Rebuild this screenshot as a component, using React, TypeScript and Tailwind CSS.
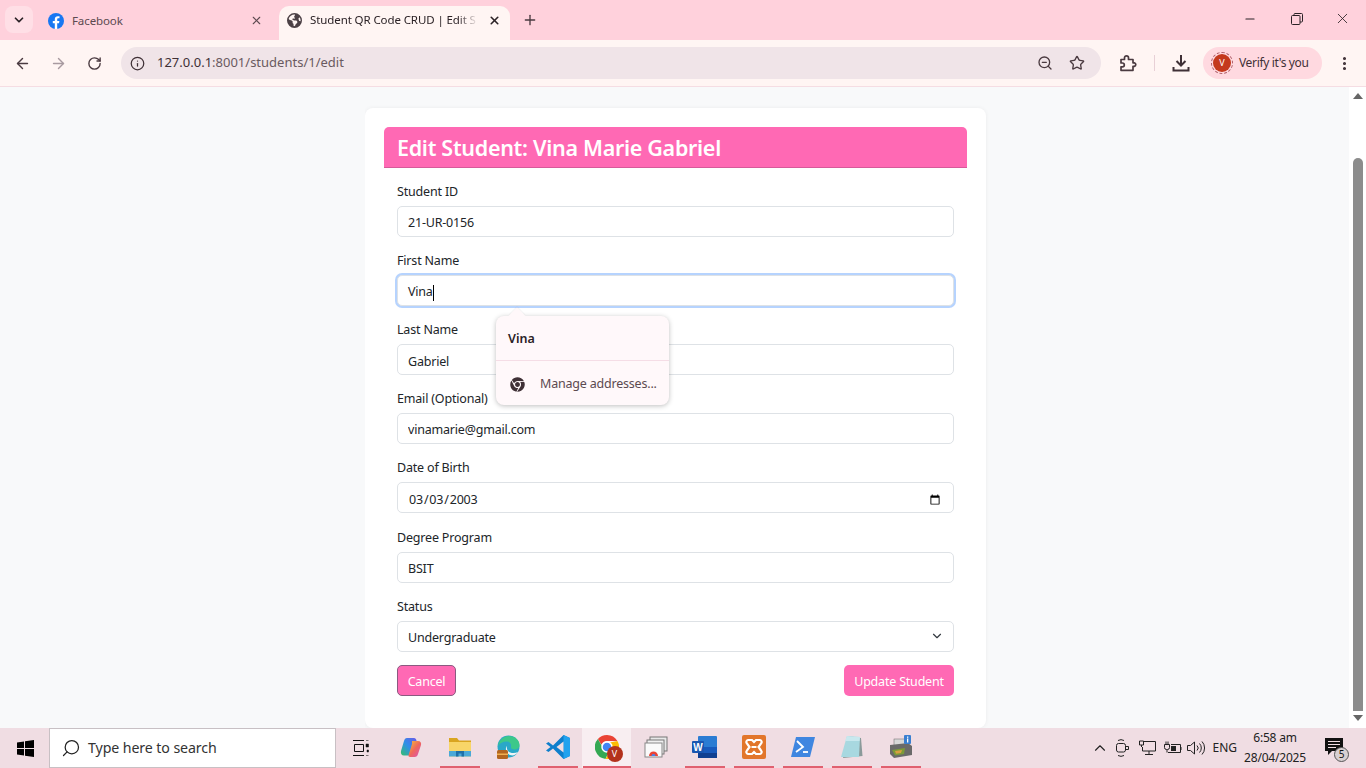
import { ArrowLeft, ArrowRight, ChevronDown, ChevronUp, Info, Minus, MoreVertical, Plus, RotateCw, Search, Star, X, ZoomOut } from 'lucide-react'
import { FaChrome } from 'react-icons/fa'
import { FaEarthAmericas } from 'react-icons/fa6'
import type { ReactNode } from 'react'

const uiFont = { fontFamily: '"Noto Sans", "Open Sans", sans-serif' }

function FacebookIcon() {
  return (
    <svg width="16" height="16" viewBox="0 0 16 16">
      <circle cx="8" cy="8" r="8" fill="#1877f2" />
      <path d="M11 10.3l.4-2.3H9.2V6.5c0-.7.3-1.2 1.3-1.2h1V3.3S10.600 3.200 9.800 3.200C8 3.200 6.800 4.300 6.800 6.200V8h-2v2.300h2V16h2.400v-5.700z" fill="#fff" />
    </svg>
  )
}

function ExtensionIcon() {
  return (
    <svg width="20" height="20" viewBox="0 0 20 20" fill="none" stroke="#4a3a40" strokeWidth="1.7" strokeLinejoin="round">
      <path d="M3 6.500h3.500V4.800a2 2 0 0 1 4 0v1.700H15v3.300h1.400a1.800 1.800 0 0 1 0 3.500H15v4H3v-3.500h1.400a1.900 1.900 0 0 0 0-3.800H3z" />
    </svg>
  )
}

function DownloadIcon() {
  return (
    <svg width="18" height="18" viewBox="0 0 18 18" fill="none" stroke="#3f3036" strokeWidth="2">
      <path d="M9 1v10M4.500 7L9 11.500 13.500 7M1.500 13v3.500h15V13" />
    </svg>
  )
}

function RestoreIcon() {
  return (
    <svg width="12" height="12" viewBox="0 0 12 12" fill="none" stroke="#2b2226" strokeWidth="1">
      <rect x="0.500" y="2.500" width="8.500" height="9" rx="1" />
      <path d="M3 2.500V1.500a1 1 0 0 1 1-1h6.500a1 1 0 0 1 1 1V8a1 1 0 0 1-1 1H9" />
    </svg>
  )
}

function WindowsLogo() {
  return (
    <svg width="17" height="17" viewBox="0 0 17 17" fill="#000">
      <path d="M0 2.400l7-1V8H0zM8 1.200l9-1.200V8H8zM0 9h7v6.600l-7-1zM8 9h9v8l-9-1.300z" />
    </svg>
  )
}

function TaskViewIcon() {
  return (
    <svg width="16" height="16" viewBox="0 0 16 16" fill="none" stroke="#111" strokeWidth="1">
      <path d="M0 .500h11M0 15.500h11M1.500 4.500h9v7h-9z" />
      <path d="M13 4h2.500v3H13zM13 .500h2.500M13 15.500h2.500M14 10h1.500v2H14z" fill="#111" strokeWidth="0.500" />
    </svg>
  )
}

function CopilotIcon() {
  return (
    <svg width="24" height="24" viewBox="0 0 24 24">
      <defs>
        <linearGradient id="copilotA" x1="0" y1="1" x2="1" y2="0">
          <stop offset="0" stopColor="#36c06a" />
          <stop offset="0.500" stopColor="#2f8fe8" />
          <stop offset="1" stopColor="#6a5ae8" />
        </linearGradient>
        <linearGradient id="copilotB" x1="0" y1="0" x2="1" y2="1">
          <stop offset="0" stopColor="#f5c33b" />
          <stop offset="0.500" stopColor="#f0685a" />
          <stop offset="1" stopColor="#d84fc0" />
        </linearGradient>
      </defs>
      <path d="M8 3h7c1.500 0 2 1 2.500 2.500L14 18c-.5 1.600-1.500 2.500-3 2.500H5c-2.500 0-3.500-2-3-4.500l3-10C5.500 4 6.500 3 8 3z" fill="url(#copilotA)" />
      <path d="M13 6h6c2.500 0 3.500 2 3 4l-3 9c-.5 1.800-1.500 3-3.500 3H11c-1.200 0-1.800-.8-1.400-2L13 9c.2-1.500 0-3 0-3z" fill="url(#copilotB)" />
    </svg>
  )
}

function FolderIcon() {
  return (
    <svg width="24" height="22" viewBox="0 0 24 22">
      <path d="M1 2h8l2 2.500h12V8H1z" fill="#d9a520" />
      <path d="M1 6h22v14.500H1z" fill="#f8d568" />
      <path d="M1 15h22v5.500H1z" fill="#4aa8d8" />
      <path d="M8 20.500V15h8v5.500h-2.500V17.500h-3v3z" fill="#1f6fa8" />
    </svg>
  )
}

function EdgeIcon() {
  return (
    <svg width="25" height="25" viewBox="0 0 25 25">
      <circle cx="12.500" cy="11.500" r="11" fill="#2aa8c8" />
      <path d="M2 11C3 4 9 1 13 1c6 0 10.500 4 10.500 9 0 3-2.500 4.500-5 4.500-3 0-4-1.500-3.500-3 .5-3-1.500-5-4.500-5C7 6.500 3.500 8 2 11z" fill="#3dc88a" />
      <path d="M11 11c-2 2-1.500 7 3 9 3 1 6 0 8-3-3 1.500-8 1.500-10-1-1-1.500-1.500-3-1-5z" fill="#f0f4f6" />
      <rect x="1" y="15" width="11" height="9" rx="1.500" fill="#b3661f" />
      <rect x="1" y="18.500" width="11" height="1.500" fill="#f0b050" />
    </svg>
  )
}

function VsCodeIcon() {
  return (
    <svg width="24" height="24" viewBox="0 0 24 24">
      <path d="M17.500 0L24 3v18l-6.500 3L7 13.500l-4.500 3.500L0 15.500 4.500 12 0 8.500 2.500 7 7 10.500z" fill="#0f7fcc" />
      <path d="M17.500 0L24 3v18l-6.500 3z" fill="#22a2ee" />
      <path d="M17.500 6.500v11L10.500 12z" fill="#f0dde3" />
    </svg>
  )
}

function ChromeTaskIcon() {
  return (
    <div className="relative h-6 w-6">
      <svg width="24" height="24" viewBox="0 0 24 24">
        <path d="M12 0a12 12 0 0 1 10.400 6H12a6 6 0 0 0-5.600 3.800L2.900 4.100A12 12 0 0 1 12 0z" fill="#ea4335" />
        <path d="M2.900 4.100l4.500 8a5 5 0 0 0 6.400 4.700L10.500 24A12 12 0 0 1 2.900 4.100z" fill="#34a853" />
        <path d="M22.400 6a12 12 0 0 1-11.900 18l5.200-9a6 6 0 0 0-.7-7.500z" fill="#fbbc04" />
        <circle cx="12" cy="12" r="5" fill="#4285f4" stroke="#fff" strokeWidth="1.500" />
      </svg>
      <span className="absolute -bottom-[3px] -right-[4px] flex h-[16px] w-[16px] items-center justify-center rounded-full bg-[#b3321c] text-[9px] text-white">V</span>
    </div>
  )
}

function RecentIcon() {
  return (
    <svg width="24" height="22" viewBox="0 0 24 22">
      <rect x="6" y="1" width="17" height="14" fill="#e8e8e8" stroke="#777" />
      <rect x="3" y="4" width="17" height="14" fill="#f0f0f0" stroke="#777" />
      <rect x="1" y="7" width="17" height="14" fill="#fafafa" stroke="#888" />
      <path d="M5 20a4.500 4.500 0 0 1 9 0z" fill="#ea4335" />
      <path d="M7.500 20a2 2 0 0 1 4 0z" fill="#4285f4" />
    </svg>
  )
}

function WordIcon() {
  return (
    <svg width="25" height="22" viewBox="0 0 25 22">
      <rect x="6" y="0" width="19" height="22" rx="1" fill="#2b7cd3" />
      <rect x="6" y="11" width="19" height="6" fill="#185abd" />
      <rect x="6" y="17" width="19" height="5" fill="#103f91" />
      <rect x="0" y="5" width="12" height="12" rx="1" fill="#1a56b0" />
      <text x="6" y="14.500" textAnchor="middle" fontSize="10" fontWeight="700" fill="#fff" fontFamily="Liberation Sans">W</text>
    </svg>
  )
}

function XamppIcon() {
  return (
    <svg width="24" height="24" viewBox="0 0 24 24">
      <rect width="24" height="24" rx="2" fill="#e2762b" />
      <path d="M6 5h4l2 2 2-2h4a2 2 0 0 1 1 3.500L16.500 12 19 15.500A2 2 0 0 1 18 19h-4l-2-2-2 2H6a2 2 0 0 1-1-3.500L7.500 12 5 8.500A2 2 0 0 1 6 5z" fill="none" stroke="#fff" strokeWidth="2.200" />
      <path d="M9.500 12h5" stroke="#fff" strokeWidth="2" />
    </svg>
  )
}

function PowerShellIcon() {
  return (
    <svg width="24" height="20" viewBox="0 0 24 20">
      <path d="M5 0h19l-5 20H0z" fill="#3f86e0" />
      <path d="M6 4l6 6-7 5" fill="none" stroke="#fff" strokeWidth="1.800" />
      <path d="M12 15h5" stroke="#fff" strokeWidth="1.800" />
    </svg>
  )
}

function NotepadIcon() {
  return (
    <svg width="24" height="24" viewBox="0 0 24 24">
      <path d="M8 1l13 2 1.500 18L3 23z" fill="#8a9a9a" />
      <path d="M7 1l13 1-1 20H1z" fill="#a8d8e0" />
      <path d="M7 1l13 1-.5 4H5z" fill="#c8e8ee" />
    </svg>
  )
}

function PrinterIcon() {
  return (
    <svg width="24" height="24" viewBox="0 0 24 24">
      <rect x="5" y="4" width="13" height="7" fill="#d8d8d8" stroke="#666" strokeWidth="0.500" />
      <path d="M1 10l18-2 4 3v9l-18 3-4-4z" fill="#6a6a6a" />
      <path d="M3 15l13-2-1 6-9 1.500z" fill="#7c9a38" />
      <path d="M6 16l7-1-1 3-5 .8z" fill="#d8a040" />
      <rect x="15" y="0" width="7" height="9" rx="1" fill="#3a7fd0" />
      <rect x="18" y="1.500" width="1.300" height="1.300" fill="#fff" />
      <rect x="18" y="3.500" width="1.300" height="4" fill="#fff" />
    </svg>
  )
}

function CameraTrayIcon() {
  return (
    <svg width="16" height="18" viewBox="0 0 16 18" fill="none" stroke="#222" strokeWidth="1">
      <rect x="1.500" y="4.500" width="9" height="8.500" rx="2" />
      <path d="M10.500 7.500h3v3h-3M3 1.500a6 6 0 0 1 6 0M3 16.500a6 6 0 0 0 6 0" />
    </svg>
  )
}

function NetworkTrayIcon() {
  return (
    <svg width="17" height="16" viewBox="0 0 17 16" fill="none" stroke="#222" strokeWidth="1">
      <path d="M4 1.500h12.500v9.500H3.500V7M10 11v3.500M6 14.500h8" />
      <path d="M.5 1h4v4h-4zM2.500 5v2" />
    </svg>
  )
}

function BatteryTrayIcon() {
  return (
    <svg width="18" height="14" viewBox="0 0 18 14" fill="none" stroke="#222" strokeWidth="1">
      <path d="M7 3.500h9.500v8H4" />
      <path d="M17 6v3" />
      <path d="M.5 3.500h5v3a2 2 0 0 1-2 2h-1a2 2 0 0 1-2-2zM2 .5v3M4 .5v3M3 8.500v3" />
      <rect x="7" y="5" width="5" height="5" fill="#222" stroke="none" />
    </svg>
  )
}

function SpeakerTrayIcon() {
  return (
    <svg width="18" height="16" viewBox="0 0 18 16" fill="none" stroke="#222" strokeWidth="1">
      <path d="M.5 5.500h3L7.500 2v12l-4-3.500h-3z" />
      <path d="M10 5.500a3.500 3.500 0 0 1 0 5M12.500 3.500a6.500 6.500 0 0 1 0 9M15 1.500a9.500 9.500 0 0 1 0 13" />
    </svg>
  )
}

function NotificationIcon() {
  return (
    <div className="relative h-[20px] w-[24px]">
      <svg width="18" height="18" viewBox="0 0 18 18">
        <path d="M0 0h18v13H7l-4 4v-4H0z" fill="#111" />
        <path d="M3 3.500h12M3 6.500h12M3 9.500h8" stroke="#f0dde3" strokeWidth="1" />
      </svg>
      <span className="absolute -bottom-[4px] right-0 flex h-[15px] w-[15px] items-center justify-center rounded-full border border-[#555] bg-[#d8d0d2] text-[10px] text-[#111]">5</span>
    </div>
  )
}

function TabBar() {
  return (
    <div className="flex h-10 items-end bg-[#ffd1dc]" style={uiFont}>
      <div className="mb-[7px] ml-[5px] flex h-[27px] w-[28px] items-center justify-center rounded-lg bg-[#ffdfe6]">
        <ChevronDown size={14} strokeWidth={3} color="#2b2226" />
      </div>
      <div className="mb-[6px] ml-[15px] flex h-[27px] w-[217px] items-center">
        <FacebookIcon />
        <span className="ml-2 text-[11.500px] tracking-[-0.1px] text-[#5c4a50]">Facebook</span>
        <X size={13} strokeWidth={2} color="#5c4a50" className="ml-auto mr-[2px]" />
      </div>
      <div className="ml-[14px] flex h-[34px] w-[231px] items-center rounded-t-[10px] bg-[#fff5f3] pb-[6px] pl-[8px]">
        <FaEarthAmericas size={15} color="#4c4045" />
        <span className="ml-2 w-[168px] overflow-hidden whitespace-nowrap text-[11.500px] tracking-[-0.1px] text-[#2b2226] [mask-image:linear-gradient(to_right,black_88%,transparent)]">Student QR Code CRUD | Edit S</span>
        <X size={13} strokeWidth={3} color="#2b2226" className="ml-[10px]" />
      </div>
      <Plus size={16} strokeWidth={2} color="#4a3a40" className="mb-[12px] ml-[12px]" />
      <div className="mb-[13px] ml-auto flex items-center">
        <Minus size={14} strokeWidth={1.8} color="#2b2226" className="mr-[34px]" />
        <RestoreIcon />
        <X size={17} strokeWidth={1.2} color="#2b2226" className="ml-[31px] mr-[15px]" />
      </div>
    </div>
  )
}

function ToolBar() {
  return (
    <div className="flex h-[47px] items-center border-b border-[#f5dde3] bg-[#fff5f3]" style={uiFont}>
      <ArrowLeft size={17} strokeWidth={2} color="#4a3a40" className="ml-[14px]" />
      <ArrowRight size={17} strokeWidth={2} color="#a89aa0" className="ml-[19px]" />
      <RotateCw size={15} strokeWidth={2.2} color="#4a3a40" className="ml-[20px]" />
      <div className="ml-[19px] flex h-8 w-[980px] items-center rounded-full bg-[#f0e4e8] pl-[9px] pr-[16px]">
        <Info size={15} strokeWidth={2} color="#3f3036" />
        <span className="ml-[12px] text-[13px] text-[#3f3036]">127.0.0.1<span className="text-[#6a5a60]">:8001/students/1/edit</span></span>
        <ZoomOut size={16} strokeWidth={2} color="#4a3a40" className="ml-auto" />
        <Star size={16} strokeWidth={2} color="#4a3a40" className="ml-[16px]" />
      </div>
      <div className="ml-[17px]"><ExtensionIcon /></div>
      <div className="ml-[16px] h-[16px] w-px bg-[#e8d0d6]" />
      <div className="ml-[17px]"><DownloadIcon /></div>
      <div className="ml-[13px] flex h-8 w-[119px] items-center rounded-full bg-[#ffd9e0] pl-[10px]">
        <span className="flex h-[18px] w-[18px] items-center justify-center rounded-full bg-[#c4391d] text-[9px] text-white outline-1 outline-offset-1 outline-dashed outline-[#b0606a]">V</span>
        <span className="ml-[8px] text-[12px] tracking-[-0.35px] text-[#3f3036]">Verify it's you</span>
      </div>
      <MoreVertical size={17} strokeWidth={2.4} color="#3f3036" className="ml-[14px]" />
    </div>
  )
}

function Field({ label, children }: { label: string; children: ReactNode }) {
  return (
    <div className="mb-[16.120px]">
      <div className="mb-[7px] h-[15px] text-[12.500px] leading-[15px] tracking-[-0.18px] text-[#212529]">{label}</div>
      {children}
    </div>
  )
}

// pt nudges the text down to where the reference has it
const inputBase = 'block h-[31px] w-full rounded-[5px] border border-[#dee2e6] bg-white px-[10px] text-[12.500px] tracking-[-0.2px] text-[#212529] outline-none'
const inputClass = `${inputBase} pt-[2px]`
const inputLowClass = `${inputBase} pt-[4px]`

function StudentForm() {
  return (
    <div className="relative ml-[365px] h-[641px] overflow-hidden pt-[21px]" style={uiFont}>
      <div className="h-[620px] w-[621px] rounded-[8px] bg-white p-[19px] shadow-[0_0_4px_rgba(0,0,0,0.06)]">
        <h1 className="flex h-[41px] items-center rounded-t-[5px] border-b border-[#d65a9a] bg-[#ff69b4] px-[13px] pt-[2px] text-[21.500px] font-semibold tracking-[-0.3px] text-white">Edit Student: Vina Marie Gabriel</h1>
        <div className="px-[13px] pt-[16px]">
          <Field label="Student ID">
            <input className={inputClass} defaultValue="21-UR-0156" readOnly />
          </Field>
          <Field label="First Name">
            <div className={`${inputLowClass} flex items-center border-[#7aa8e8] shadow-[0_0_0_2px_rgba(13,110,253,0.3)]`}>
              Vina<span className="h-[16px] w-px bg-black" />
            </div>
          </Field>
          <Field label="Last Name">
            <input className={inputLowClass} defaultValue="Gabriel" readOnly />
          </Field>
          <Field label="Email (Optional)">
            <input className={inputClass} defaultValue="vinamarie@gmail.com" readOnly />
          </Field>
          <Field label="Date of Birth">
            <input type="date" className={inputLowClass} defaultValue="2003-03-03" />
          </Field>
          <Field label="Degree Program">
            <input className={inputClass} defaultValue="BSIT" readOnly />
          </Field>
          <Field label="Status">
            <div className="relative">
              <select className={`${inputLowClass} appearance-none`} defaultValue="Undergraduate">
                <option>Undergraduate</option>
              </select>
              <ChevronDown size={14} strokeWidth={2} color="#343a40" className="absolute right-[10px] top-[8px]" />
            </div>
          </Field>
          <div className="-mt-[3px] flex justify-between">
            <button className="h-[31px] w-[59px] rounded-[5px] border border-[#8a5a80] bg-[#ff69b4] pt-[4px] text-[12.500px] tracking-[-0.2px] text-white">Cancel</button>
            <button className="h-[31px] w-[110px] rounded-[5px] bg-[#ff69b4] pt-[4px] text-[12.500px] tracking-[-0.2px] text-white">Update Student</button>
          </div>
        </div>
      </div>
      <div className="absolute left-[131px] top-[229px] w-[173px] rounded-[8px] bg-[#fff8fa] shadow-[0_1px_5px_rgba(0,0,0,0.25)]">
        <span className="absolute -top-[6px] left-[15px] h-3 w-3 rotate-45 bg-[#fff8fa] shadow-[-1px_-1px_1px_rgba(0,0,0,0.04)]" />
        <div className="flex h-[45px] items-center border-b border-[#f5dde6] pl-[12px] pt-[2px] text-[12.500px] font-semibold text-[#2b2226]">Vina</div>
        <div className="flex h-[44px] items-center pl-[14px] pt-[2px] text-[12.500px] tracking-[-0.2px] text-[#5c4a50]">
          <FaChrome size={15} color="#3f3036" />
          <span className="ml-[15px] whitespace-nowrap">Manage addresses...</span>
        </div>
      </div>
    </div>
  )
}

function Scrollbar() {
  return (
    <div className="flex w-[17px] shrink-0 flex-col items-center bg-white pt-[6px]">
      <span className="h-0 w-0 border-x-[5px] border-b-[6px] border-x-transparent border-b-[#666]" />
      <div className="mt-[59px] h-[553px] w-[10px] rounded-t-[5px] bg-[#8c8c8c]" />
      <span className="mt-[4px] h-0 w-0 border-x-[5px] border-t-[6px] border-x-transparent border-t-[#666]" />
    </div>
  )
}

type TaskItem = { icon: ReactNode; open?: boolean; active?: boolean }

const taskItems: TaskItem[] = [
  { icon: <CopilotIcon /> },
  { icon: <FolderIcon />, open: true },
  { icon: <EdgeIcon /> },
  { icon: <VsCodeIcon />, open: true },
  { icon: <ChromeTaskIcon />, open: true, active: true },
  { icon: <RecentIcon /> },
  { icon: <WordIcon />, open: true },
  { icon: <XamppIcon />, open: true },
  { icon: <PowerShellIcon />, open: true },
  { icon: <NotepadIcon />, open: true },
  { icon: <PrinterIcon />, open: true },
]

function TaskBar() {
  return (
    <div className="flex h-10 items-center bg-[#f0dde3]" style={uiFont}>
      <div className="flex w-[49px] justify-center pl-[1px]"><WindowsLogo /></div>
      <div className="flex h-10 w-[287px] items-center border border-[#c8c0c4] bg-white pl-[11px]">
        <Search size={20} strokeWidth={1.5} color="#222" className="-scale-x-100" />
        <span className="ml-[7px] text-[14.200px] tracking-[-0.1px] text-[#333]">Type here to search</span>
      </div>
      <div className="flex w-[50px] justify-center"><TaskViewIcon /></div>
      {taskItems.map((item, i) => (
        <div key={i} className={`flex h-10 w-[49px] flex-col ${item.active ? 'bg-[#f8eef1]' : ''}`}>
          <div className="flex flex-1 items-center justify-center">{item.icon}</div>
          <div className={`h-[2px] ${item.active ? 'ml-px' : 'ml-[5px] mr-[4px]'} ${item.open ? 'bg-[#e0606f]' : ''}`} />
        </div>
      ))}
      <div className="ml-auto flex items-center">
        <ChevronUp size={18} strokeWidth={1.5} color="#222" />
        <div className="ml-[6px]"><CameraTrayIcon /></div>
        <div className="ml-[8px]"><NetworkTrayIcon /></div>
        <div className="ml-[8px]"><BatteryTrayIcon /></div>
        <div className="ml-[5px]"><SpeakerTrayIcon /></div>
        <span className="ml-[7px] text-[12px] text-[#222]">ENG</span>
        <div className="ml-[7px] w-[62px] text-center text-[12px] leading-[20px] tracking-[-0.2px] text-[#222]">
          <div>6:58 am</div>
          <div>28/04/2025</div>
        </div>
        <div className="ml-[19px] mr-[17px]"><NotificationIcon /></div>
      </div>
    </div>
  )
}

export default function App() {
  return (
    <div className="flex h-[768px] w-[1366px] flex-col overflow-hidden">
      <TabBar />
      <ToolBar />
      <div className="flex h-[641px] bg-[#f8f9fa]">
        <div className="min-w-0 flex-1">
          <StudentForm />
        </div>
        <Scrollbar />
      </div>
      <TaskBar />
    </div>
  )
}
